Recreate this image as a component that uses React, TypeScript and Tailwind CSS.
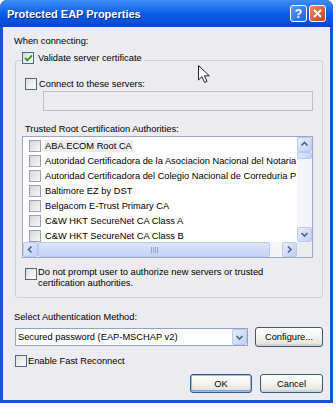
import React from 'react';

const font = "font-['Liberation_Sans',Arial,sans-serif]";

function Box({ checked = false, light = false }: { checked?: boolean; light?: boolean }) {
  return (
    <div
      className={`w-[12px] h-[12px] shrink-0 border flex items-center justify-center ${
        light
          ? 'border-[#9AA3B3] bg-linear-to-br from-[#D6D6DB] to-[#F8F8F8]'
          : 'border-[#4E6688] bg-linear-to-br from-[#DCDCD8] to-white'
      }`}
    >
      {checked && (
        <svg width="9" height="8" viewBox="0 0 9 8">
          <path d="M1 3.8 L3.4 6.3 L8 1.4" stroke="#21A121" strokeWidth="1.9" fill="none" />
        </svg>
      )}
    </div>
  );
}

function Arrow({ dir }: { dir: 'up' | 'down' | 'left' | 'right' }) {
  const d = {
    up: 'M1.5 5.5 L4.5 2.5 L7.5 5.5',
    down: 'M1.5 3 L4.5 6 L7.5 3',
    left: 'M5.5 1.5 L2.5 4.5 L5.5 7.5',
    right: 'M3 1.5 L6 4.5 L3 7.5',
  }[dir];
  return (
    <svg width="9" height="9" viewBox="0 0 9 9">
      <path d={d} stroke="#4D6185" strokeWidth="1.6" fill="none" />
    </svg>
  );
}

function ScrollBtn({ dir, cls }: { dir: 'up' | 'down' | 'left' | 'right'; cls: string }) {
  return (
    <div
      className={`${cls} shrink-0 rounded-[2px] border border-[#B7C9F2] bg-linear-to-br from-[#E6EEFD] to-[#BED0F6] flex items-center justify-center`}
    >
      <Arrow dir={dir} />
    </div>
  );
}

// the list is scrolled horizontally at 0, so long names end at the scrollbar
const certs = [
  'ABA.ECOM Root CA',
  'Autoridad Certificadora de la Asociacion Nacional del Notaria',
  'Autoridad Certificadora del Colegio Nacional de Correduria P',
  'Baltimore EZ by DST',
  'Belgacom E-Trust Primary CA',
  'C&W HKT SecureNet CA Class A',
  'C&W HKT SecureNet CA Class B',
];

function XpButton({ label, def = false, w }: { label: string; def?: boolean; w: string }) {
  return (
    <div
      className={`${w} h-[19px] rounded-[3px] border border-[#2F5A8C] bg-linear-to-b from-white via-[#F3F3EF] to-[#E1E0DA] flex items-center justify-center ${
        def ? 'shadow-[inset_0_0_0_1px_#9DBCEC,inset_0_-1px_0_1px_#7EA3E0]' : 'shadow-[inset_0_-2px_0_#D6D4CA]'
      }`}
    >
      {label}
    </div>
  );
}

export default function App() {
  return (
    <div className={`relative w-[336px] h-[407px] bg-white text-[9.3px] leading-[12px] text-black ${font}`}>
      <div className="w-[333px] h-[403px] flex flex-col rounded-t-[7px] overflow-hidden bg-[#1A55D6]">
        {/* title bar */}
        <div className="h-[27px] shrink-0 flex items-center pl-[7px] pr-[7px] bg-linear-to-b from-[#3F8DF6] via-[#0A5EE8] to-[#0449D2]">
          <span className="flex-1 text-white font-bold text-[11px] [text-shadow:1px_1px_0_#0A2A8A]">
            Protected EAP Properties
          </span>
          <div className="flex gap-[2px]">
            <div className="w-[17px] h-[17px] rounded-[3px] border border-white bg-linear-to-br from-[#5C9AF8] to-[#1F5FDD] flex items-center justify-center text-white font-bold text-[12px] leading-none">
              ?
            </div>
            <div className="w-[17px] h-[17px] rounded-[3px] border border-white bg-linear-to-br from-[#EC8A66] to-[#C53E18] flex items-center justify-center">
              <svg width="9" height="9" viewBox="0 0 9 9">
                <path d="M1 1 L8 8 M8 1 L1 8" stroke="white" strokeWidth="1.8" />
              </svg>
            </div>
          </div>
        </div>

        {/* body */}
        <div className="flex-1 mx-[3px] mb-[3px] bg-[#ECEBF0] flex flex-col">
          <div className="pt-[8px] pl-[11px] h-[20px]">When connecting:</div>

          {/* group box */}
          <div className="mt-[13px] ml-[12px] w-[308px] border border-[#D2D1D6] rounded-[3px] flex flex-col pb-[8px]">
            <div className="-mt-[9px] ml-[6px] w-fit flex items-center gap-[4px] pr-[2px] bg-[#ECEBF0]">
              <Box checked />
              <span>Validate server certificate</span>
            </div>

            <div className="mt-[14px] ml-[9px] flex items-center gap-[2px]">
              <Box />
              <span>Connect to these servers:</span>
            </div>
            <div className="mt-[1px] ml-[27px] w-[270px] h-[20px] border border-[#BFBFC6]" />

            <div className="mt-[12px] ml-[9px] h-[12px]">Trusted Root Certification Authorities:</div>

            {/* list */}
            <div className="mt-[1px] ml-[6px] w-[291px] h-[122px] border border-[#9CA9BD] bg-white flex flex-col">
              <div className="h-[105px] flex">
                <div className="flex-1 overflow-hidden pt-[1px]">
                  {certs.map((c, i) => (
                    <div key={c} className="h-[15px] flex items-center pl-[6px] gap-[4px] whitespace-nowrap">
                      <Box light />
                      <span className={i === 0 ? 'bg-[#EDEDED] px-[1px] -ml-[1px]' : ''}>{c}</span>
                    </div>
                  ))}
                </div>
                <div className="w-[15px] flex flex-col bg-[#F5F5F9]">
                  <ScrollBtn dir="up" cls="h-[15px]" />
                  <div className="h-[7px] rounded-[2px] border border-[#B7C9F2] bg-linear-to-r from-[#DCE6FC] to-[#C3D3F8]" />
                  <div className="flex-1" />
                  <ScrollBtn dir="down" cls="h-[15px]" />
                </div>
              </div>
              <div className="h-[15px] flex bg-[#F5F5F9]">
                <ScrollBtn dir="left" cls="w-[15px]" />
                <div className="w-[232px] rounded-[2px] border border-[#B7C9F2] bg-linear-to-b from-[#DCE6FC] to-[#C3D3F8] flex items-center justify-center gap-[1px]">
                  <div className="w-[1px] h-[6px] bg-[#8FA8DC]" />
                  <div className="w-[1px] h-[6px] bg-[#8FA8DC]" />
                  <div className="w-[1px] h-[6px] bg-[#8FA8DC]" />
                  <div className="w-[1px] h-[6px] bg-[#8FA8DC]" />
                </div>
                <div className="flex-1" />
                <ScrollBtn dir="right" cls="w-[15px]" />
                <div className="w-[15px] bg-[#ECEBF0]" />
              </div>
            </div>

            <div className="mt-[9px] ml-[9px] flex items-start gap-[1px]">
              <div className="mt-[1px]">
                <Box />
              </div>
              <span className="leading-[11px]">
                Do not prompt user to authorize new servers or trusted
                <br />
                certification authorities.
              </span>
            </div>
          </div>

          <div className="mt-[13px] ml-[11px] h-[12px]">Select Authentication Method:</div>

          <div className="mt-[4px] ml-[12px] h-[20px] flex items-center gap-[7px]">
            <div className="w-[233px] h-[18px] border border-[#8FA4C2] bg-white flex items-center">
              <span className="flex-1 pl-[2px]">Secured password (EAP-MSCHAP v2)</span>
              <ScrollBtn dir="down" cls="w-[15px] h-[16px]" />
            </div>
            <XpButton label="Configure..." w="w-[68px] h-[20px]" />
          </div>

          <div className="mt-[8px] ml-[12px] flex items-center gap-[1px]">
            <Box />
            <span>Enable Fast Reconnect</span>
          </div>

          <div className="mt-[7px] pr-[7px] flex justify-end gap-[8px]">
            <XpButton label="OK" def w="w-[62px]" />
            <XpButton label="Cancel" w="w-[63px]" />
          </div>
        </div>
      </div>

      {/* mouse pointer */}
      <svg className="absolute left-[198px] top-[65px]" width="13" height="19" viewBox="0 0 13 19">
        <path d="M0.5 0.5 L0.5 15 L4 11.6 L6.6 17.5 L9 16.4 L6.5 10.8 L11.3 10.8 Z" fill="white" stroke="#222" strokeWidth="1" />
      </svg>
    </div>
  );
}
